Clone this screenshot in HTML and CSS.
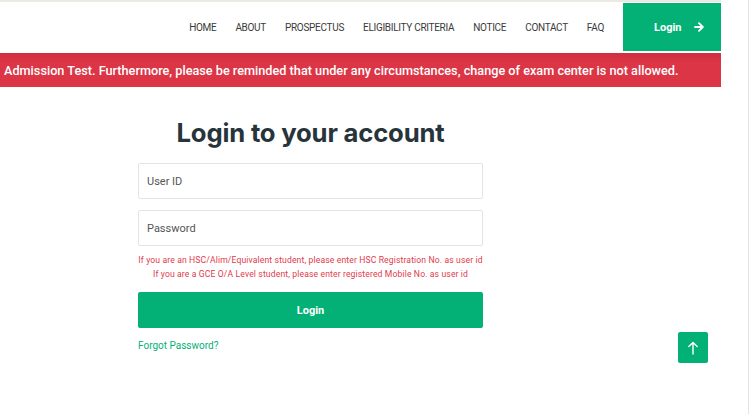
FILE: index.html
```html
<!DOCTYPE html>
<html lang="en">
<head>
  <meta charset="UTF-8" />
  <meta name="viewport" content="width=device-width, initial-scale=1.0"/>
  <title>Login</title>
  <link rel="stylesheet" href="styles.css">
</head>
<body>

  <div class="page">
    <!-- Header -->
    <header class="topbar">
      <nav class="menu">
        <a href="#">HOME</a>
        <a href="#">ABOUT</a>
        <a href="#">PROSPECTUS</a>
        <a href="#">ELIGIBILITY CRITERIA</a>
        <a href="#">NOTICE</a>
        <a href="#">CONTACT</a>
        <a href="#">FAQ</a>
      </nav>
      <a href="#" class="nav-login">Login
        <svg width="10" height="10" viewBox="0 0 10 10" fill="none" stroke="#fff" stroke-width="1.9" stroke-linecap="round" stroke-linejoin="round">
          <path d="M1 5h7.6M5 1.2L8.8 5 5 8.8"/>
        </svg>
      </a>
    </header>

    <!-- Notice ticker -->
    <div class="ticker">
      <p>Admission Test. Furthermore, please be reminded that under any circumstances, change of exam center is not allowed.</p>
    </div>

    <!-- Login form -->
    <main class="login-wrap">
      <h1>Login to your account</h1>
      <form class="login-form">
        <input type="text" placeholder="User ID" />
        <input type="password" placeholder="Password" />
        <p class="hint">If you are an HSC/Alim/Equivalent student, please enter HSC Registration No. as user id</p>
        <p class="hint">If you are a GCE O/A Level student, please enter registered Mobile No. as user id</p>
        <button type="submit">Login</button>
        <a href="#" class="forgot">Forgot Password?</a>
      </form>
    </main>
  </div>

  <div class="rail"></div>

  <a href="#" class="to-top">
    <svg width="12" height="14" viewBox="0 0 12 14" fill="none" stroke="#fff" stroke-width="1.4" stroke-linecap="round" stroke-linejoin="round">
      <path d="M6 13V1.5M1.8 5.6L6 1.5l4.2 4.1"/>
    </svg>
  </a>

</body>
</html>
```

FILE: styles.css
```css
:root {
  --green: #03b075;
  --red: #dc3545;
  --text: #333;
  --heading: #27343b;
  --border: #e1e4e8;
}

* {
  margin: 0;
  padding: 0;
  box-sizing: border-box;
}

body {
  font-family: Roboto, "Liberation Sans", sans-serif;
  background: #fff;
  color: var(--text);
  display: flex;
  height: 414px;
  overflow: hidden;
}

.page {
  width: 721px;
  flex-shrink: 0;
  border-top: 2px solid #ebe9e4;
}

.rail {
  width: 28px;
  border-right: 1px solid #e4e4e4;
}

/* header */
.topbar {
  display: flex;
  justify-content: flex-end;
  align-items: stretch;
  height: 49px;
  padding-top: 1px;
}

.menu {
  display: flex;
  align-items: center;
  gap: 19px;
  margin-right: 19px;
}

.menu a {
  color: #3a3a3a;
  text-decoration: none;
  font-size: 10px;
  letter-spacing: -0.3px;
}

.nav-login {
  width: 98px;
  background: var(--green);
  color: #fff;
  text-decoration: none;
  font-weight: 700;
  font-size: 11px;
  display: flex;
  align-items: center;
  gap: 12px;
  padding-left: 31px;
}

/* ticker */
.ticker {
  margin-top: 2px;
  height: 34px;
  background: linear-gradient(#cf2f41, var(--red) 30%);
  display: flex;
  align-items: center;
  overflow: hidden;
  white-space: nowrap;
}

.ticker p {
  color: #fff;
  font-size: 12.7px;
  font-weight: 500;
  padding-left: 4px;
  padding-top: 1px;
}

/* login */
.login-wrap {
  width: 345px;
  margin-left: 138px;
  padding-top: 30px;
}

.login-wrap h1 {
  font-family: Inter, "Noto Sans", sans-serif;
  font-weight: 700;
  font-size: 25.7px;
  color: var(--heading);
  text-align: center;
  letter-spacing: -0.2px;
  margin-bottom: 15px;
}

.login-form {
  display: flex;
  flex-direction: column;
}

.login-form input {
  height: 36px;
  border: 1px solid var(--border);
  border-radius: 2px;
  padding: 0 8px;
  font-family: Roboto, sans-serif;
  font-size: 11px;
  color: #444;
  margin-bottom: 11px;
}

.login-form input::placeholder {
  color: #555;
}

.hint {
  color: #df3a4c;
  font-size: 8.6px;
  letter-spacing: 0.13px;
  text-align: center;
  line-height: 14px;
  white-space: nowrap;
}

.login-form input + .hint {
  margin-top: -4px;
}

.login-form button {
  margin-top: 11px;
  height: 36px;
  border: none;
  border-radius: 2px;
  background: var(--green);
  color: #fff;
  font-family: Roboto, sans-serif;
  font-weight: 700;
  font-size: 11px;
  cursor: pointer;
}

.forgot {
  margin-top: 12px;
  color: var(--green);
  font-size: 10px;
  text-decoration: none;
}

.to-top {
  position: fixed;
  left: 678px;
  top: 332px;
  width: 30px;
  height: 31px;
  background: var(--green);
  border-radius: 2px;
  display: flex;
  align-items: center;
  justify-content: center;
}
```
